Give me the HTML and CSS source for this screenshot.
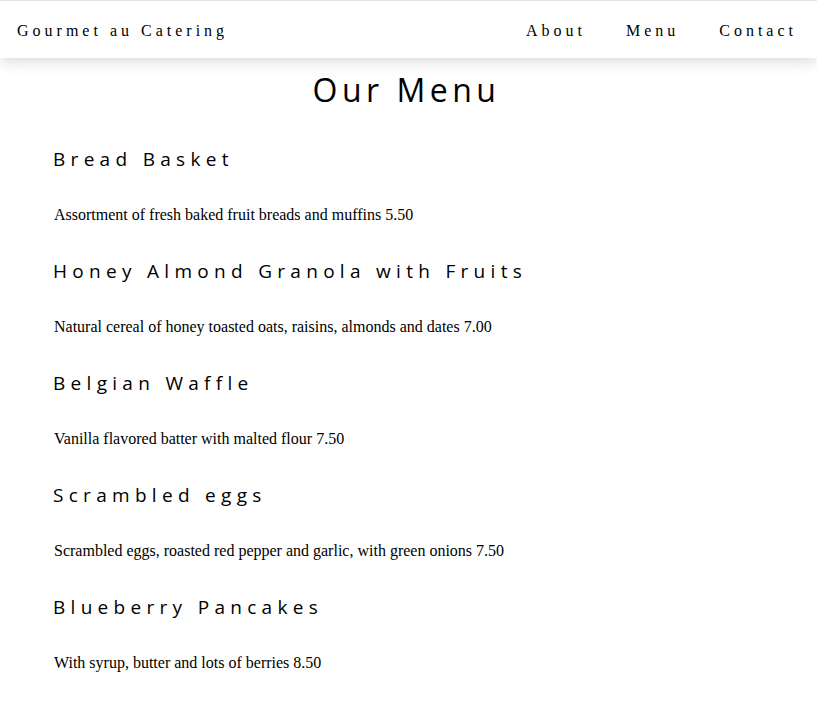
FILE: index.html
```html
<!DOCTYPE html>
<html lang="en">
<head>
<meta charset="utf-8">
<title>Gourmet au Catering</title>
<link rel="stylesheet" href="styles.css">
</head>
<body>
<nav class="topbar">
  <a class="brand" href="#">Gourmet au Catering</a>
  <div class="links">
    <a class="link" href="#">About</a>
    <a class="link" href="#">Menu</a>
    <a class="link" href="#">Contact</a>
  </div>
</nav>
<main class="menu">
  <h1 class="title">Our Menu</h1>
  <div class="items">
    <section class="item">
      <h4 class="item-name">Bread Basket</h4>
      <p class="item-desc">Assortment of fresh baked fruit breads and muffins 5.50</p>
    </section>
    <section class="item">
      <h4 class="item-name">Honey Almond Granola with Fruits</h4>
      <p class="item-desc">Natural cereal of honey toasted oats, raisins, almonds and dates 7.00</p>
    </section>
    <section class="item">
      <h4 class="item-name">Belgian Waffle</h4>
      <p class="item-desc">Vanilla flavored batter with malted flour 7.50</p>
    </section>
    <section class="item">
      <h4 class="item-name">Scrambled eggs</h4>
      <p class="item-desc">Scrambled eggs, roasted red pepper and garlic, with green onions 7.50</p>
    </section>
    <section class="item">
      <h4 class="item-name">Blueberry Pancakes</h4>
      <p class="item-desc">With syrup, butter and lots of berries 8.50</p>
    </section>
  </div>
</main>
</body>
</html>
```
FILE: styles.css
```css
html, body {
  margin: 0;
  padding: 0;
  background: #ffffff;
  color: #000000;
  font-family: "Liberation Serif", "Times New Roman", serif;
  font-size: 16px;
}

.topbar {
  position: relative;
  z-index: 2;
  box-sizing: border-box;
  display: flex;
  align-items: center;
  justify-content: space-between;
  height: 58px;
  padding-top: 2px;
  border-top: 1px solid #e4e4e4;
  background: #ffffff;
  box-shadow: 0 4px 10px 0 rgba(0, 0, 0, 0.08), 0 4px 20px 0 rgba(0, 0, 0, 0.07);
}

.brand,
.link {
  color: #000000;
  text-decoration: none;
  letter-spacing: 4px;
  line-height: 18px;
  font-size: 16px;
}

.brand {
  padding-left: 17px;
}

.links {
  display: flex;
}

.link {
  padding: 0 20px;
}

.menu {
  padding: 13px 0 40px 53px;
}

.title {
  margin: 0 0 39px -57px;
  text-align: center;
  font-family: "Open Sans", "Noto Sans", sans-serif;
  font-weight: 400;
  font-size: 32px;
  line-height: 38px;
  letter-spacing: 4.5px;
}

.items {
  display: flex;
  flex-direction: column;
  gap: 33px;
}

.item {
  display: flex;
  flex-direction: column;
  gap: 32px;
}

.item-name {
  margin: 0;
  font-family: "Open Sans", "Noto Sans", sans-serif;
  font-weight: 400;
  font-size: 19px;
  line-height: 23px;
  letter-spacing: 5.3px;
}

.item-desc {
  margin: 0;
  padding-left: 1px;
  font-size: 16px;
  line-height: 24px;
}
```
